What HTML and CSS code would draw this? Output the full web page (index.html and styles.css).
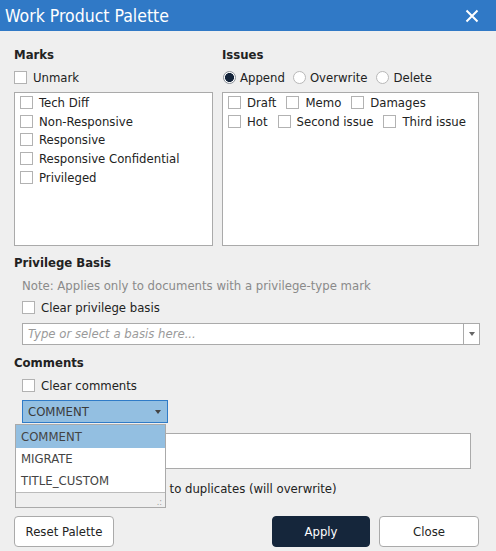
FILE: index.html
```html
<!DOCTYPE html>
<html>
<head>
<meta charset="utf-8">
<link rel="stylesheet" href="styles.css">
</head>
<body>
<div class="dialog">
  <div class="titlebar">
    <span class="title">Work Product Palette</span>
    <svg class="close-x" width="14" height="14" viewBox="0 0 14 14"><path d="M1.5 1.5 L12.5 12.5 M12.5 1.5 L1.5 12.5" stroke="#fff" stroke-width="2" fill="none"/></svg>
  </div>
  <div class="content">
    <div class="top-grid">
      <div class="col">
        <div class="heading">Marks</div>
        <label class="row"><span class="cb"></span>Unmark</label>
        <div class="listbox marks">
          <label class="item"><span class="cb"></span>Tech Diff</label>
          <label class="item"><span class="cb"></span>Non-Responsive</label>
          <label class="item"><span class="cb"></span>Responsive</label>
          <label class="item"><span class="cb"></span>Responsive Confidential</label>
          <label class="item"><span class="cb"></span>Privileged</label>
        </div>
      </div>
      <div class="col">
        <div class="heading">Issues</div>
        <div class="row radios">
          <label class="radio-opt"><span class="rb on"></span>Append</label>
          <label class="radio-opt"><span class="rb"></span>Overwrite</label>
          <label class="radio-opt"><span class="rb"></span>Delete</label>
        </div>
        <div class="listbox issues">
          <div class="issue-row">
            <label class="item"><span class="cb"></span>Draft</label>
            <label class="item"><span class="cb"></span>Memo</label>
            <label class="item"><span class="cb"></span>Damages</label>
          </div>
          <div class="issue-row">
            <label class="item"><span class="cb"></span>Hot</label>
            <label class="item"><span class="cb"></span>Second issue</label>
            <label class="item"><span class="cb"></span>Third issue</label>
          </div>
        </div>
      </div>
    </div>

    <div class="heading sec">Privilege Basis</div>
    <div class="indent">
      <div class="row note">Note: Applies only to documents with a privilege-type mark</div>
      <label class="row"><span class="cb"></span>Clear privilege basis</label>
      <div class="combo">
        <span class="combo-input">Type or select a basis here...</span>
        <span class="combo-btn"><span class="tri"></span></span>
      </div>
    </div>

    <div class="heading sec sec-comments">Comments</div>
    <div class="indent">
      <label class="row"><span class="cb"></span>Clear comments</label>
      <div class="select-wrap">
        <div class="select">COMMENT<span class="tri"></span></div>
        <div class="dropdown">
          <div class="opt active">COMMENT</div>
          <div class="opt">MIGRATE</div>
          <div class="opt">TITLE_CUSTOM</div>
          <div class="dd-foot"><span class="grip">.:</span></div>
        </div>
      </div>
      <div class="textarea"></div>
      <label class="row dup"><span class="cb"></span>Propagate comments to duplicates (will overwrite)</label>
    </div>

    <div class="buttons">
      <button class="btn reset">Reset Palette</button>
      <div class="spacer"></div>
      <button class="btn primary">Apply</button>
      <button class="btn close">Close</button>
    </div>
  </div>
</div>
</body>
</html>
```
FILE: styles.css
```css
* { box-sizing: border-box; }
html, body {
  margin: 0;
  padding: 0;
  background: #efefef;
}
body {
  font-family: "DejaVu Sans Condensed", "DejaVu Sans", Verdana, sans-serif;
  font-size: 13px;
  color: #222;
  width: 496px;
  height: 551px;
  overflow: hidden;
}
.titlebar {
  height: 31px;
  background: #3079c6;
  display: flex;
  align-items: center;
  justify-content: space-between;
  padding: 0 17px 0 5px;
}
.title {
  color: #fff;
  font-size: 17.5px;
}
.close-x { display: block; margin-top: 1px; }

.content {
  padding: 14px 17px 0 14px;
}
.top-grid {
  display: grid;
  grid-template-columns: 199px 257px;
  column-gap: 9px;
}
.heading {
  font-weight: bold;
  height: 18px;
  line-height: 18px;
  font-size: 13px;
  margin-top: 1px;
}
.row {
  display: flex;
  align-items: center;
  height: 18px;
  margin-top: 4px;
  white-space: nowrap;
}
.cb {
  display: inline-block;
  width: 13px;
  height: 13px;
  border: 1px solid #b2b2b2;
  background: #fff;
  margin-right: 6px;
  flex: none;
}
.radio-opt {
  display: flex;
  align-items: center;
  margin-right: 7px;
}
.radio-opt:last-child { margin-left: 1px; }
.rb {
  display: inline-block;
  width: 13px;
  height: 13px;
  border-radius: 50%;
  border: 1px solid #b8b8b8;
  background: #fff;
  margin-right: 4px;
  margin-left: 1px;
}
.rb.on {
  border-color: #8a9098;
  background: radial-gradient(circle, #14243a 0, #14243a 4.2px, #fff 4.8px);
}
.listbox {
  margin-top: 6px;
  height: 154px;
  background: #fff;
  border: 1px solid #aaa;
}
.marks {
  padding: 0 0 0 5px;
}
.item {
  display: flex;
  align-items: center;
  height: 18.75px;
  white-space: nowrap;
}
.issues {
  padding: 0 0 0 5px;
}
.issue-row {
  display: flex;
}
.issue-row .item { margin-right: 10px; }

.sec { margin-top: 8px; }
.sec-comments { margin-top: 9px; }
.indent { padding-left: 8px; }
.note { color: #8a8a8a; margin-top: 4px; }
.combo {
  margin-top: 7px;
  height: 22px;
  width: 458px;
  display: flex;
  background: #fff;
  border: 1px solid #aaa;
}
.combo-input {
  flex: 1;
  padding-left: 5px;
  line-height: 20px;
  font-style: italic;
  color: #9a9a9a;
}
.combo-btn {
  width: 16px;
  border-left: 1px solid #aaa;
  display: flex;
  align-items: center;
  justify-content: center;
}
.tri {
  width: 0;
  height: 0;
  border-left: 3.5px solid transparent;
  border-right: 3.5px solid transparent;
  border-top: 4px solid #666;
}
.select-wrap {
  position: relative;
  margin-top: 6px;
  width: 146px;
  height: 23px;
}
.select {
  height: 23px;
  border: 1px solid #2f7bc7;
  background: #93bfe1;
  color: #3a3a3a;
  padding: 0 6px 0 5px;
  display: flex;
  align-items: center;
  justify-content: space-between;
}
.select .tri { border-top-color: #444; }
.dropdown {
  position: absolute;
  left: -7px;
  top: 24px;
  width: 151px;
  background: #fff;
  border: 1px solid #aaa;
  z-index: 5;
}
.opt {
  height: 22px;
  line-height: 22px;
  padding-left: 5px;
  color: #444;
}
.opt.active {
  height: 23px;
  line-height: 23px;
  background: #93bfe1;
}
.dd-foot {
  height: 15px;
  background: #efefef;
  border-top: 1px solid #bbb;
  position: relative;
}
.grip {
  position: absolute;
  right: 3px;
  bottom: 0;
  font-size: 9px;
  color: #999;
  line-height: 10px;
}
.textarea {
  margin-top: 10px;
  width: 449px;
  height: 36px;
  background: #fff;
  border: 1px solid #aaa;
}
.dup { margin-top: 10px; }

.buttons {
  margin-top: 19px;
  display: flex;
  align-items: center;
}
.spacer { flex: 1; }
.btn {
  font-family: inherit;
  font-size: 13px;
  height: 31px;
  border-radius: 4px;
  border: 1px solid #aaa;
  background: #fff;
  color: #222;
  padding: 0;
}
.reset { width: 100px; }
.primary {
  width: 98px;
  background: #15263b;
  border-color: #15263b;
  color: #fff;
  margin-right: 9px;
}
.close { width: 100px; }
```
